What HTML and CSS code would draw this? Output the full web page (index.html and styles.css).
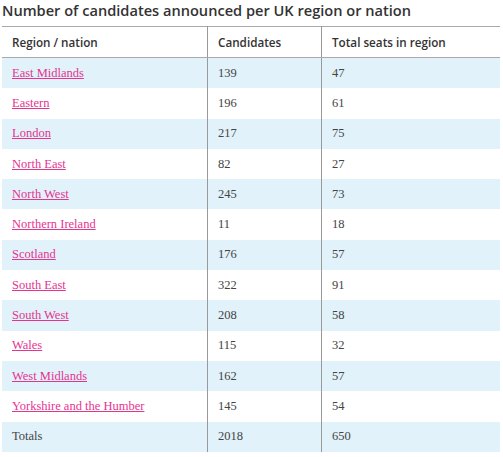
FILE: index.html
```html
<!DOCTYPE html>
<html>
<head>
<meta charset="utf-8">
<link rel="stylesheet" href="styles.css">
</head>
<body>
<h2 class="title">Number of candidates announced per UK region or nation</h2>
<table class="data">
  <thead>
    <tr><th>Region / nation</th><th>Candidates</th><th>Total seats in region</th></tr>
  </thead>
  <tbody>
    <tr><td><a href="#">East Midlands</a></td><td>139</td><td>47</td></tr>
    <tr><td><a href="#">Eastern</a></td><td>196</td><td>61</td></tr>
    <tr><td><a href="#">London</a></td><td>217</td><td>75</td></tr>
    <tr><td><a href="#">North East</a></td><td>82</td><td>27</td></tr>
    <tr><td><a href="#">North West</a></td><td>245</td><td>73</td></tr>
    <tr><td><a href="#">Northern Ireland</a></td><td>11</td><td>18</td></tr>
    <tr><td><a href="#">Scotland</a></td><td>176</td><td>57</td></tr>
    <tr><td><a href="#">South East</a></td><td>322</td><td>91</td></tr>
    <tr><td><a href="#">South West</a></td><td>208</td><td>58</td></tr>
    <tr><td><a href="#">Wales</a></td><td>115</td><td>32</td></tr>
    <tr><td><a href="#">West Midlands</a></td><td>162</td><td>57</td></tr>
    <tr><td><a href="#">Yorkshire and the Humber</a></td><td>145</td><td>54</td></tr>
    <tr><td>Totals</td><td>2018</td><td>650</td></tr>
  </tbody>
</table>
</body>
</html>
```
FILE: styles.css
```css
html, body { margin: 0; padding: 0; background: #fff; }
body { padding: 0 2px; }
.title {
  margin: 0;
  padding-top: 1px;
  height: 25px;
  font-family: "Open Sans", sans-serif;
  font-weight: 600;
  font-size: 14.6px;
  line-height: 18px;
  color: #333;
}
.data {
  width: 498px;
  border-collapse: collapse;
  border-top: 1px solid #aaa;
}
.data th {
  font-family: "Open Sans", sans-serif;
  font-weight: 600;
  font-size: 11.7px;
  color: #333;
  text-align: left;
  height: 30px;
  padding: 0 0 0 10px;
  border-bottom: 1px solid #aaa;
}
.data td {
  font-family: "Liberation Serif", serif;
  font-size: 12.5px;
  color: #444;
  height: 30.3px;
  padding: 0 0 0 10px;
}
.data th + th, .data td + td { border-left: 1px solid #999; }
.data th:nth-child(1) { width: 195px; }
.data th:nth-child(2) { width: 103px; }
.data tbody tr:nth-child(odd) { background: #e1f2fa; }
.data a { color: #e6338f; text-decoration: underline; }
```
